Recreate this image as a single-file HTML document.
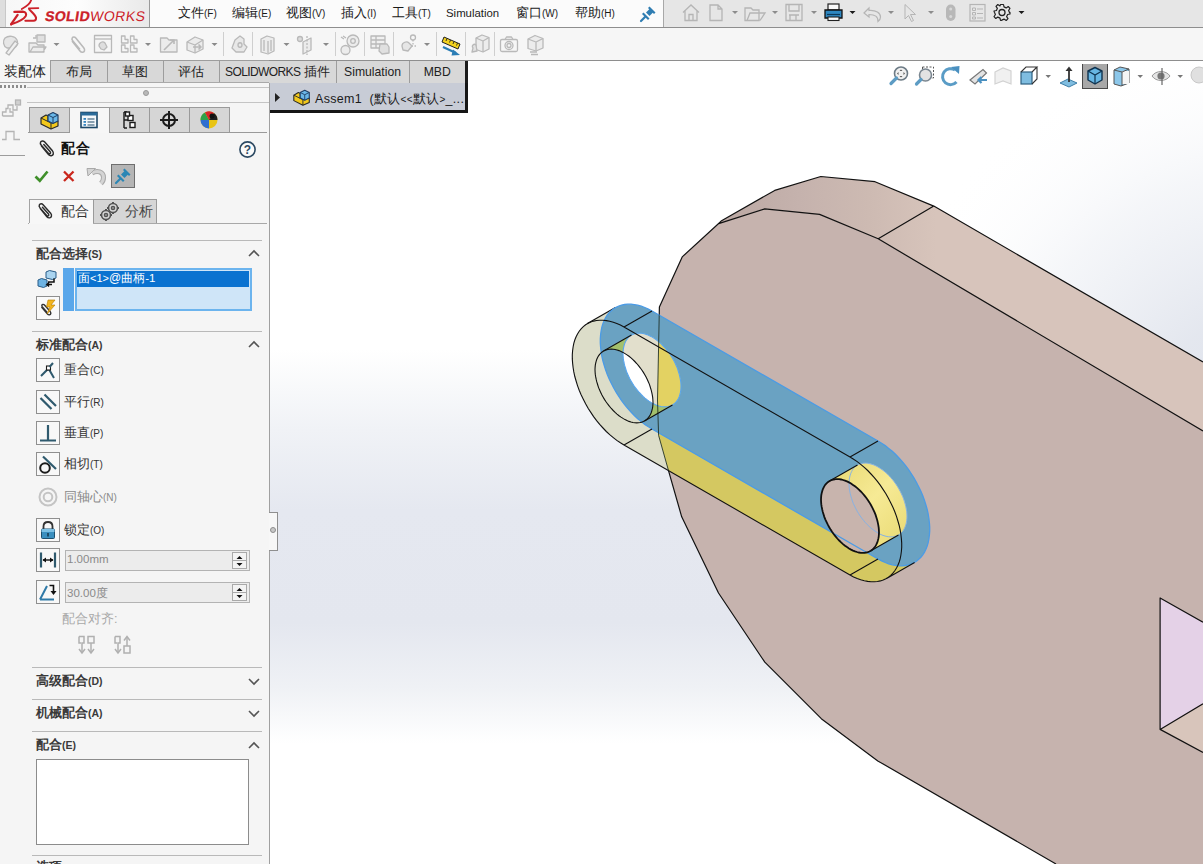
<!DOCTYPE html>
<html><head><meta charset="utf-8">
<style>
*{margin:0;padding:0;box-sizing:border-box}
html,body{width:1203px;height:864px;overflow:hidden;background:#f5f5f5;font-family:"Liberation Sans",sans-serif;color:#222}
.a{position:absolute}
.menu{font-size:13px;top:4px;color:#1a1a1a;white-space:nowrap}
.menu small{font-size:10px}
.tab{position:absolute;top:60px;height:23px;background:#d8d8d8;border:1px solid #9d9d9d;border-bottom:none;font-size:13px;text-align:center;line-height:21px;color:#222}
.hdr{position:absolute;left:36px;font-size:12.5px;font-weight:bold;color:#3a3a3a;white-space:nowrap}
.hdr small{font-size:10.5px}
.hline{position:absolute;left:32px;width:230px;height:1px;background:#b9b9b9}
.mbtn{position:absolute;left:36px;width:24px;height:24px;border:1px solid #8f8f8f;background:#f8f8f8}
.mlbl{position:absolute;left:64px;font-size:12.5px;color:#333;white-space:nowrap}
.mlbl small{font-size:10px}
</style></head><body>
<!-- MENUBAR -->
<div class="a" style="left:0;top:0;width:1203px;height:27px;background:#fbfbfb"></div>
<div class="a" style="left:0;top:0;width:5px;height:27px;background:#dedede"></div>
<div class="a" style="left:5px;top:0;width:145px;height:27px;background:linear-gradient(90deg,#f7f7f7,#fdfdfd 50%,#e9e9e9);border-left:1px solid #c8c8c8;border-right:1px solid #9a9a9a"></div>
<div class="a" style="left:663px;top:0;width:540px;height:27px;background:#e6e6e6;border-left:1px solid #a8a8a8"></div>
<div class="a" style="left:0;top:27px;width:1203px;height:1px;background:#8e8e8e"></div>
<svg class="a" style="left:0;top:0" width="150" height="27" viewBox="0 0 150 27">
<g fill="none" stroke="#cc2129" stroke-linecap="round" stroke-linejoin="round">
<path d="M11.2 24.2 L17.6 14.9" stroke-width="2.3"/>
<path d="M14.3 11.9 L22.8 11.6 C26 11.9 26.8 14 25.6 16.2 C24 18.8 20.5 21.2 11.2 24.3" stroke-width="2.1"/>
<path d="M21.8 9.0 C25.5 7 30 4.5 31.2 0.0" stroke-width="1.8"/>
<path d="M28.8 8.3 L38.4 8.1" stroke-width="1.7"/>
<path d="M29.3 9.4 C31.5 12 35.5 15 36 17.8 C36.2 19.8 35.3 20.6 33.5 20.7 L25.4 20.8" stroke-width="2.1"/>
</g>
</svg>
<div class="a" style="left:44px;top:8px;font-size:14px;line-height:16px;color:#cc2129;white-space:nowrap;transform:skewX(-9deg);transform-origin:0 100%"><b style="font-weight:bold;letter-spacing:0.45px;-webkit-text-stroke:0.3px #cc2129">SOLID</b><span style="letter-spacing:0.5px">WORKS</span></div>

<div class="a menu" style="left:178px">文件<small>(F)</small></div>
<div class="a menu" style="left:232px">编辑<small>(E)</small></div>
<div class="a menu" style="left:286px">视图<small>(V)</small></div>
<div class="a menu" style="left:341px">插入<small>(I)</small></div>
<div class="a menu" style="left:392px">工具<small>(T)</small></div>
<div class="a menu" style="left:516px">窗口<small>(W)</small></div>
<div class="a menu" style="left:575px">帮助<small>(H)</small></div>
<div class="a menu" style="left:446px;font-size:11.4px;top:7px">Simulation</div>
<svg class="a" style="left:639px;top:5px" width="18" height="18" viewBox="0 0 18 18"><g fill="#2f7db2"><path d="M10.5 1.5 L16.5 7.5 L15 9 L9 3 Z"/><path d="M11 3.5 L14.5 7 L10.5 11 L7 7.5 Z"/><path d="M4.5 7.5 L10.5 13.5 L9 15 L3 9 Z"/></g><path d="M6 12 L2 16" stroke="#2f7db2" stroke-width="2.2" stroke-linecap="round"/></svg>

<svg class="a" style="left:663px;top:0" width="540" height="27" viewBox="663 0 540 27"><g fill="none" stroke="#b5b5b5" stroke-width="1.3">
<path d="M683 12.5 L691 5 L699 12.5 M685 11 V20.5 H697 V11 M689 20.5 V14.5 H693 V20.5"/>
<path d="M710 5 H718 L722 9 V20.5 H710 Z M718 5 V9 H722"/>
<path d="M745 8 H751 L753 10 H759 V20.5 H745 Z M747 20.5 L750 13 H765 L760 20.5"/>
<path d="M786 4.5 H802 V20.5 H786 Z M789 4.5 V11 H799 V4.5 M790 15 V20.5 M796 15 V20.5 M789 15 H799"/>
<path d="M864 13 L869 8 L869 10.5 C876 10 880.5 13 880.5 17 C880.5 19 879.5 20.5 878 21.5 C878.2 16.5 875 14.5 869 14.5 L869 17 Z" stroke-width="1.2"/>
<path d="M905 4.5 L905 19 L908.5 15.5 L911.5 21.5 L913.5 20.5 L910.5 14.5 L915.5 14.5 Z" stroke-width="1"/>
<rect x="970" y="4.5" width="15" height="16.5" stroke-width="1.2"/><path d="M972.5 8 H975.5 V10.5 H972.5 Z M972.5 12.5 H975.5 V15 H972.5 Z M972.5 17 H975.5 V19 H972.5 Z M977 9 H983 M977 13.5 H983 M977 18 H983" stroke-width="1"/>
</g>
<g fill="#8c8c8c"><path d="M732 11 H738 L735 14 Z"/><path d="M772 11 H778 L775 14 Z"/><path d="M811 11 H817 L814 14 Z"/><path d="M888 11 H894 L891 14 Z"/><path d="M928 11 H934 L931 14 Z"/></g>
<g fill="#1b1b1b"><path d="M849.5 11 H855.5 L852.5 14 Z"/><path d="M1018.5 11 H1024.5 L1021.5 14 Z"/></g>
<rect x="946" y="4.5" width="9.5" height="16.5" rx="4.7" fill="#b8b8b8"/><circle cx="950.7" cy="9" r="1.5" fill="#d8d8d8"/><circle cx="950.7" cy="16.5" r="1.5" fill="#d8d8d8"/>
<rect x="828" y="4" width="11" height="6" fill="#fafafa" stroke="#222" stroke-width="1.2"/>
<path d="M825 10 H842 V18 H825 Z" fill="#2e87c0" stroke="#111" stroke-width="1.3"/><rect x="828" y="17" width="11" height="3.5" fill="#fafafa" stroke="#222" stroke-width="1.1"/>
<path d="M827 14.5 H840" stroke="#0c3a5a" stroke-width="1.2"/>
<g transform="translate(1002 12.5)"><path d="M-1.5 -8 H1.5 L2 -5.6 L4.2 -4.6 L6.2 -6 L8 -4.2 L6.6 -2 L7.6 0.2 L8 0 V1.5 L5.6 2 L4.6 4.2 L6 6.2 L4.2 8 L2 6.6 L-0.2 7.6 L-0.5 8 H-1.5 L-2 5.6 L-4.2 4.6 L-6.2 6 L-8 4.2 L-6.6 2 L-7.6 -0.2 L-8 -1.5 L-5.6 -2 L-4.6 -4.2 L-6 -6.2 L-4.2 -8 L-2 -6.6 Z" fill="none" stroke="#222" stroke-width="1.2" stroke-linejoin="round"/><circle r="3" fill="none" stroke="#222" stroke-width="1.3"/></g>
</svg>

<!-- TOOLBAR -->
<div class="a" style="left:0;top:28px;width:1203px;height:32px;background:#f6f6f6"></div>
<div class="a" style="left:50px;top:60px;width:1153px;height:1px;background:#8e8e8e"></div>
<svg class="a" style="left:0;top:27px" width="560" height="33" viewBox="0 27 560 33"><g fill="none" stroke="#b9b9b9" stroke-width="1.3" stroke-linejoin="round">
<!-- edit component -->
<path d="M5 38 C9 35 15 36 17 40 C18.5 43 17 47 14 48 L7 48 C3 46 2.5 41 5 38 Z" fill="#e6e6e6"/><path d="M6 53 L15 41 L18 43.5 L9 55 Z" fill="#f0f0f0"/>
<!-- insert components -->
<path d="M29 43 H36 L38 45 H44 V52 H29 Z M30 52 L33 47 H46 L43 52" fill="#ececec"/><rect x="37" y="35" width="8" height="7" fill="#e0e0e0"/><path d="M33 38 H36 V35"/>
<!-- mate paperclip -->
<path d="M72 41 L80 51 C81.5 53 84 52.5 84.5 50.8 C85 49.5 84.4 48.6 83.7 47.7 L75.8 38 C74.7 36.7 72.8 36.8 72.2 38 C71.7 39 72 40 72.7 40.8 L80 49.5" stroke-width="1.6"/>
<!-- component preview -->
<rect x="94.5" y="35.5" width="17" height="17"/><path d="M94.5 39 H111.5"/><path d="M99 46 C99 42 103 41 105 43 L107 47 L104 50 L101 49 Z" fill="#dedede"/>
<!-- pattern -->
<path d="M121.5 36 H125 V39.5 H128 V43 H121.5 Z M130.5 36 H134 V39.5 H137 V43 H130.5 Z M121.5 45 H125 V48.5 H128 V52 H121.5 Z M130.5 45 H134 V48.5 H137 V52 H130.5 Z"/>
<!-- smart fasteners -->
<path d="M160.5 38 H167 L169 40 H177 V52 H160.5 Z" fill="#ececec"/><path d="M164 50 L174 40 M170 40 H174 V44" stroke-width="1.6"/>
<!-- move component -->
<path d="M187 42 L195 37 L203 40 V49 L195 53 L187 50 Z" fill="#ececec"/><path d="M187 42 L195 45 L203 40 M195 45 V53"/><path d="M193 47 H201 M198.5 44.5 L201 47 L198.5 49.5" stroke-width="1.6"/>
<!-- show hidden -->
<path d="M235 40 L240 36 L244 39 L244 44 L247 47 L244 52 L236 52 L232 48 Z" fill="#e8e8e8"/><path d="M238 45 C238 42 242 42 242 45 C242 48 238 48 238 45" />
<!-- assembly features -->
<path d="M261 39 L267 36 L274 38 V51 L268 54 L261 52 Z" fill="#ececec"/><path d="M264 40 V51 M268 41 V53 M271 40 V51"/>
<!-- ref geometry -->
<circle cx="300" cy="39" r="2.5" fill="#dcdcdc"/><path d="M303 42 L311 38 V50 L303 54 Z" fill="#ececec"/><path d="M307 36 V55" stroke-dasharray="2 1.5"/>
<!-- motion study -->
<circle cx="353" cy="41" r="6" fill="#ececec"/><circle cx="353" cy="41" r="2.3"/><circle cx="345.5" cy="50" r="4.5" fill="#ececec"/><path d="M343 36 L346 38 M344 39 L341 37"/>
<!-- BOM -->
<rect x="371" y="36" width="14" height="12" fill="#f0f0f0"/><path d="M371 40 H385 M371 44 H385 M376 36 V48"/><path d="M380 44 L387 44 L389 47 V53 L382 54 L379 51 Z" fill="#e0e0e0"/>
<!-- exploded -->
<path d="M402 46 C402 42 407 41 409 43 L412 46 L408 51 L403 50 Z" fill="#e6e6e6"/><circle cx="413" cy="37.5" r="2.5"/><path d="M413 40 V46 M416 46 H410" stroke-dasharray="1.5 1.5"/>
<!-- interference -->
<path d="M476 38 L482 35 L489 37.5 V49 L483 52 L476 49.5 Z" fill="#ececec"/><path d="M476 38 L483 41 L489 37.5 M483 41 V52"/><path d="M473 48 C471 46 474 43 476 45 L477 51 L472 52 Z" fill="#e3e3e3"/>
<!-- camera -->
<rect x="500.5" y="39.5" width="17" height="12" rx="1.5"/><circle cx="509" cy="45.5" r="4"/><circle cx="509" cy="45.5" r="2"/><path d="M505 39.5 L506.5 37 H511.5 L513 39.5"/>
<!-- last -->
<path d="M528 39 L535 35.5 L543 38.5 V48 L536 51 L528 48.5 Z" fill="#ececec"/><path d="M528 39 L536 42 L543 38.5 M536 42 V51 M530 52 H537 M531 54.5 H538"/>
</g>
<g fill="#8a8a8a"><path d="M53.5 43 H59.5 L56.5 46 Z"/><path d="M145 43 H151 L148 46 Z"/><path d="M211.5 43 H217.5 L214.5 46 Z"/><path d="M283.5 43 H289.5 L286.5 46 Z"/><path d="M323 43 H329 L326 46 Z"/><path d="M424 43 H430 L427 46 Z"/></g>
<g fill="#cfcfcf"><rect x="223" y="32" width="1" height="24"/><rect x="252" y="32" width="1" height="24"/><rect x="335" y="32" width="1" height="24"/><rect x="364" y="32" width="1" height="24"/><rect x="393" y="32" width="1" height="24"/><rect x="436" y="32" width="1" height="24"/><rect x="465" y="32" width="1" height="24"/><rect x="494" y="32" width="1" height="24"/></g>
<!-- measure (coloured) -->
<path d="M444 37 L460 44 L458 49 L442 42 Z" fill="#f3d21f" stroke="#222" stroke-width="1"/><path d="M447 38.5 L446 41 M450.5 40 L449.5 42.5 M454 41.5 L453 44 M457.5 43 L456.5 45.5" stroke="#222" stroke-width="0.9"/>
<path d="M443 47 L456 53" stroke="#2a7db5" stroke-width="2.2"/><path d="M453 49.5 L460 55 L451.5 55.5 Z" fill="#2a7db5"/>
</svg>

<!-- VIEWPORT -->
<svg width="934" height="804" viewBox="269 60 934 804" style="position:absolute;left:269px;top:60px">
<defs>
<filter id="blur" filterUnits="userSpaceOnUse" x="0" y="0" width="1500" height="1100"><feGaussianBlur stdDeviation="55"/></filter>
<clipPath id="cbody"><path d="M682.2 256.9 L721.1 221.1 L774.7 190.4 L820.8 176.5 L875.0 181.7 L933.8 206.1 L1203.0 362.0 L1203.0 864.0 L1056.0 864.0 L877.8 760.9 L821.3 718.7 L764.8 662.2 L718.5 593.0 L681.7 516.8 L668.5 470.6 L658.6 435.4 L657.5 400.0 L659.4 307.1 Z"/></clipPath>
<clipPath id="cvp"><rect x="269" y="60" width="934" height="804"/></clipPath>
<linearGradient id="gtop" gradientUnits="userSpaceOnUse" x1="720" y1="0" x2="960" y2="0"><stop offset="0" stop-color="#bba8a3"/><stop offset="0.33" stop-color="#c5b2ad"/><stop offset="0.62" stop-color="#cdbab2"/><stop offset="0.9" stop-color="#d7c4bb"/></linearGradient>
<linearGradient id="gyel" x1="0" y1="0" x2="1" y2="1"><stop offset="0" stop-color="#e6d66e"/><stop offset="0.5" stop-color="#f6ea95"/><stop offset="1" stop-color="#e8d870"/></linearGradient>
</defs>
<rect x="269" y="60" width="934" height="804" fill="#ffffff"/>
<linearGradient id="gbg" gradientUnits="userSpaceOnUse" x1="0" y1="60" x2="0" y2="864">
<stop offset="0.36" stop-color="#ffffff"/><stop offset="0.46" stop-color="#f0f2f6"/><stop offset="0.56" stop-color="#e5e8f0"/><stop offset="0.70" stop-color="#e4e7ef"/><stop offset="0.78" stop-color="#eff1f5"/><stop offset="0.85" stop-color="#ffffff"/></linearGradient>
<radialGradient id="gbr" gradientUnits="userSpaceOnUse" cx="1270" cy="430" r="400"><stop offset="0" stop-color="#dde1eb" stop-opacity="1"/><stop offset="0.3" stop-color="#dfe3ec" stop-opacity="0.85"/><stop offset="0.65" stop-color="#e2e6ee" stop-opacity="0.35"/><stop offset="1" stop-color="#ffffff" stop-opacity="0"/></radialGradient>
<rect x="269" y="60" width="934" height="804" fill="url(#gbg)"/>
<rect x="269" y="60" width="934" height="804" fill="url(#gbr)"/>
<path d="M718.6 223.6 L764.7 208.9 L819.6 214.4 L878.2 238.8 L1203.0 431.0 L1203.0 864.0 L1056.0 864.0 L877.8 760.9 L821.3 718.7 L764.8 662.2 L718.5 593.0 L681.7 516.8 L668.5 470.6 L658.6 435.4 L657.5 400.0 L659.4 307.1 L682.2 256.9 Z" fill="#c6b3ae"/>
<path d="M721.1 221.1 L774.7 190.4 L820.8 176.5 L875.0 181.7 L933.8 206.1 L1203.0 362.0 L1203.0 431.0 L878.2 238.8 L819.6 214.4 L764.7 208.9 L718.6 223.6 Z" fill="url(#gtop)"/>
<path d="M1160.1 598.0 L1203.0 622.3 L1203.0 703.8 L1160.1 729.4 Z" fill="#e4d1e7"/>
<path d="M1160.1 729.4 L1203.0 703.8 L1203.0 752.5 Z" fill="#d8c5bb"/>
<path d="M682.2 256.9 L721.1 221.1 L774.7 190.4 L820.8 176.5 L875.0 181.7 L933.8 206.1 L1203.0 362.0 M718.6 223.6 L764.7 208.9 L819.6 214.4 L878.2 238.8 L1203.0 431.0 M878.2 238.8 L933.8 206.1 M1056.0 864.0 L877.8 760.9 L821.3 718.7 L764.8 662.2 L718.5 593.0 L681.7 516.8 L668.5 470.6 L658.6 435.4 L657.5 400.0 L659.4 307.1 L682.2 256.9 L718.6 223.6 M1203.0 622.3 L1160.1 598.0 L1160.1 729.4 L1203.0 752.5 M1160.1 729.4 L1203.0 703.8" fill="none" stroke="#111" stroke-width="1.2" stroke-linejoin="round"/>
<path d="M652.0 311.0 L878.0 441.0 L881.7 443.2 L885.4 445.8 L889.0 448.6 L892.6 451.6 L896.1 454.9 L899.5 458.5 L902.8 462.2 L906.0 466.2 L909.0 470.3 L911.9 474.5 L914.6 478.9 L917.1 483.4 L919.4 488.0 L921.5 492.7 L923.4 497.4 L925.0 502.1 L926.4 506.7 L927.6 511.4 L928.5 516.0 L929.2 520.5 L929.6 524.9 L929.7 529.2 L929.6 533.3 L929.2 537.3 L928.5 541.1 L927.6 544.6 L926.4 548.0 L925.0 551.1 L923.4 553.9 L921.5 556.5 L919.4 558.7 L917.1 560.7 L914.6 562.4 L886.6 578.4 L883.9 579.7 L881.0 580.7 L878.0 581.4 L874.8 581.8 L871.5 581.8 L868.1 581.5 L864.6 580.8 L861.0 579.9 L857.4 578.6 L853.7 576.9 L850.0 575.0 L624.0 445.0 L620.3 442.8 L616.6 440.2 L613.0 437.4 L609.4 434.4 L605.9 431.1 L602.5 427.5 L599.2 423.8 L596.0 419.8 L593.0 415.7 L590.1 411.5 L587.4 407.1 L584.9 402.6 L582.6 398.0 L580.5 393.3 L578.6 388.6 L577.0 383.9 L575.6 379.3 L574.4 374.6 L573.5 370.0 L572.8 365.5 L572.4 361.1 L572.3 356.8 L572.4 352.7 L572.8 348.7 L573.5 344.9 L574.4 341.4 L575.6 338.0 L577.0 334.9 L578.6 332.1 L580.5 329.5 L582.6 327.3 L584.9 325.3 L587.4 323.6 L615.4 307.6 L618.1 306.3 L621.0 305.3 L624.0 304.6 L627.2 304.2 L630.5 304.2 L633.9 304.5 L637.4 305.2 L641.0 306.1 L644.6 307.4 L648.3 309.1 L652.0 311.0 Z" fill="#dcddc9"/>
<path d="M652.0 311.0 L878.0 441.0 L881.7 443.2 L885.4 445.8 L889.0 448.6 L892.6 451.6 L896.1 454.9 L899.5 458.5 L902.8 462.2 L906.0 466.2 L909.0 470.3 L911.9 474.5 L914.6 478.9 L917.1 483.4 L919.4 488.0 L921.5 492.7 L923.4 497.4 L925.0 502.1 L926.4 506.7 L927.6 511.4 L928.5 516.0 L929.2 520.5 L929.6 524.9 L929.7 529.2 L929.6 533.3 L929.2 537.3 L928.5 541.1 L927.6 544.6 L926.4 548.0 L925.0 551.1 L923.4 553.9 L921.5 556.5 L919.4 558.7 L917.1 560.7 L914.6 562.4 L886.6 578.4 L883.9 579.7 L881.0 580.7 L878.0 581.4 L874.8 581.8 L871.5 581.8 L868.1 581.5 L864.6 580.8 L861.0 579.9 L857.4 578.6 L853.7 576.9 L850.0 575.0 L624.0 445.0 L620.3 442.8 L616.6 440.2 L613.0 437.4 L609.4 434.4 L605.9 431.1 L602.5 427.5 L599.2 423.8 L596.0 419.8 L593.0 415.7 L590.1 411.5 L587.4 407.1 L584.9 402.6 L582.6 398.0 L580.5 393.3 L578.6 388.6 L577.0 383.9 L575.6 379.3 L574.4 374.6 L573.5 370.0 L572.8 365.5 L572.4 361.1 L572.3 356.8 L572.4 352.7 L572.8 348.7 L573.5 344.9 L574.4 341.4 L575.6 338.0 L577.0 334.9 L578.6 332.1 L580.5 329.5 L582.6 327.3 L584.9 325.3 L587.4 323.6 L615.4 307.6 L618.1 306.3 L621.0 305.3 L624.0 304.6 L627.2 304.2 L630.5 304.2 L633.9 304.5 L637.4 305.2 L641.0 306.1 L644.6 307.4 L648.3 309.1 L652.0 311.0 Z" fill="#d4c861" clip-path="url(#cbody)"/>
<path d="M587.4 323.6 L615.4 307.6" fill="none" stroke="#111" stroke-width="1.1"/>
<path d="M878.0 441.0 L881.6 443.2 L885.2 445.6 L888.7 448.4 L892.3 451.3 L895.7 454.5 L899.0 458.0 L902.3 461.6 L905.4 465.4 L908.4 469.4 L911.2 473.6 L913.9 477.8 L916.4 482.2 L918.7 486.7 L920.9 491.2 L922.8 495.8 L924.5 500.4 L925.9 505.0 L927.2 509.5 L928.2 514.1 L928.9 518.5 L929.4 522.9 L929.7 527.1 L929.7 531.2 L929.4 535.2 L928.9 539.0 L928.2 542.6 L927.2 546.0 L925.9 549.2 L924.5 552.1 L922.8 554.8 L920.9 557.2 L918.7 559.3 L916.4 561.2 L913.9 562.7 L911.2 564.0 L908.4 564.9 L905.4 565.5 L902.3 565.8 L899.0 565.8 L895.7 565.4 L892.3 564.8 L888.7 563.8 L885.2 562.5 L881.6 560.9 L878.0 559.0 L652.0 429.0 L648.4 426.8 L644.8 424.4 L641.3 421.6 L637.7 418.7 L634.3 415.5 L631.0 412.0 L627.7 408.4 L624.6 404.6 L621.6 400.6 L618.8 396.4 L616.1 392.2 L613.6 387.8 L611.3 383.3 L609.1 378.8 L607.2 374.2 L605.5 369.6 L604.1 365.0 L602.8 360.5 L601.8 355.9 L601.1 351.5 L600.6 347.1 L600.3 342.9 L600.3 338.8 L600.6 334.8 L601.1 331.0 L601.8 327.4 L602.8 324.0 L604.1 320.8 L605.5 317.9 L607.2 315.2 L609.1 312.8 L611.3 310.7 L613.6 308.8 L616.1 307.3 L618.8 306.0 L621.6 305.1 L624.6 304.5 L627.7 304.2 L631.0 304.2 L634.3 304.6 L637.7 305.2 L641.3 306.2 L644.8 307.5 L648.4 309.1 L652.0 311.0 Z M681.0 386.4 L680.9 384.0 L680.7 381.6 L680.3 379.1 L679.8 376.6 L679.2 374.1 L678.4 371.5 L677.6 368.9 L676.6 366.4 L675.4 363.8 L674.2 361.3 L672.8 358.8 L671.4 356.4 L669.8 354.0 L668.2 351.8 L666.5 349.6 L664.7 347.5 L662.8 345.5 L660.9 343.6 L659.0 341.9 L657.0 340.3 L655.0 338.9 L653.0 337.6 L651.0 336.4 L649.0 335.4 L647.0 334.6 L645.0 334.0 L643.1 333.5 L641.2 333.2 L639.3 333.1 L637.5 333.2 L635.8 333.5 L634.2 333.9 L632.6 334.5 L631.2 335.3 L629.8 336.2 L628.6 337.4 L627.4 338.6 L626.4 340.1 L625.6 341.6 L624.8 343.3 L624.2 345.2 L623.7 347.1 L623.3 349.2 L623.1 351.4 L623.0 353.6 L623.1 356.0 L623.3 358.4 L623.7 360.9 L624.2 363.4 L624.8 365.9 L625.6 368.5 L626.4 371.1 L627.4 373.6 L628.6 376.2 L629.8 378.7 L631.2 381.2 L632.6 383.6 L634.2 386.0 L635.8 388.2 L637.5 390.4 L639.3 392.5 L641.2 394.5 L643.1 396.4 L645.0 398.1 L647.0 399.7 L649.0 401.1 L651.0 402.4 L653.0 403.6 L655.0 404.6 L657.0 405.4 L659.0 406.0 L660.9 406.5 L662.8 406.8 L664.7 406.9 L666.5 406.8 L668.2 406.5 L669.8 406.1 L671.4 405.5 L672.8 404.7 L674.2 403.8 L675.4 402.6 L676.6 401.4 L677.6 399.9 L678.4 398.4 L679.2 396.7 L679.8 394.8 L680.3 392.9 L680.7 390.8 L680.9 388.6 L681.0 386.4 Z M907.0 516.4 L906.9 514.0 L906.7 511.6 L906.3 509.1 L905.8 506.6 L905.2 504.1 L904.4 501.5 L903.6 498.9 L902.6 496.4 L901.4 493.8 L900.2 491.3 L898.8 488.8 L897.4 486.4 L895.8 484.0 L894.2 481.8 L892.5 479.6 L890.7 477.5 L888.8 475.5 L886.9 473.6 L885.0 471.9 L883.0 470.3 L881.0 468.9 L879.0 467.6 L877.0 466.4 L875.0 465.4 L873.0 464.6 L871.0 464.0 L869.1 463.5 L867.2 463.2 L865.3 463.1 L863.5 463.2 L861.8 463.5 L860.2 463.9 L858.6 464.5 L857.2 465.3 L855.8 466.2 L854.6 467.4 L853.4 468.6 L852.4 470.1 L851.6 471.6 L850.8 473.3 L850.2 475.2 L849.7 477.1 L849.3 479.2 L849.1 481.4 L849.0 483.6 L849.1 486.0 L849.3 488.4 L849.7 490.9 L850.2 493.4 L850.8 495.9 L851.6 498.5 L852.4 501.1 L853.4 503.6 L854.6 506.2 L855.8 508.7 L857.2 511.2 L858.6 513.6 L860.2 516.0 L861.8 518.2 L863.5 520.4 L865.3 522.5 L867.2 524.5 L869.1 526.4 L871.0 528.1 L873.0 529.7 L875.0 531.1 L877.0 532.4 L879.0 533.6 L881.0 534.6 L883.0 535.4 L885.0 536.0 L886.9 536.5 L888.8 536.8 L890.7 536.9 L892.5 536.8 L894.2 536.5 L895.8 536.1 L897.4 535.5 L898.8 534.7 L900.2 533.8 L901.4 532.6 L902.6 531.4 L903.6 529.9 L904.4 528.4 L905.2 526.7 L905.8 524.8 L906.3 522.9 L906.7 520.8 L906.9 518.6 L907.0 516.4 Z" fill="#6aa2c2" fill-rule="evenodd"/>
<path d="M631.5 335.1 L633.0 334.3 L634.6 333.8 L636.2 333.4 L638.0 333.2 L639.8 333.1 L641.6 333.3 L643.5 333.6 L645.5 334.1 L647.5 334.8 L649.5 335.7 L651.5 336.7 L653.5 337.9 L655.5 339.2 L657.5 340.7 L659.5 342.3 L661.4 344.1 L663.3 346.0 L665.1 348.0 L666.9 350.1 L668.6 352.3 L670.2 354.6 L671.7 357.0 L673.2 359.4 L674.5 361.9 L675.7 364.4 L676.8 367.0 L677.8 369.6 L678.7 372.1 L679.4 374.7 L680.0 377.2 L680.4 379.7 L680.7 382.2 L680.9 384.6 L680.9 386.9 L680.8 389.2 L680.6 391.3 L680.2 393.4 L679.7 395.3 L679.0 397.1 L678.2 398.8 L677.3 400.3 L676.3 401.7 L675.1 402.9 L673.9 404.0 L672.5 404.9 L644.5 420.9 L643.0 421.7 L641.4 422.2 L639.8 422.6 L638.0 422.8 L636.2 422.9 L634.4 422.7 L632.5 422.4 L630.5 421.9 L628.5 421.2 L626.5 420.3 L624.5 419.3 L622.5 418.1 L620.5 416.8 L618.5 415.3 L616.5 413.7 L614.6 411.9 L612.7 410.0 L610.9 408.0 L609.1 405.9 L607.4 403.7 L605.8 401.4 L604.3 399.0 L602.8 396.6 L601.5 394.1 L600.3 391.6 L599.2 389.0 L598.2 386.4 L597.3 383.9 L596.6 381.3 L596.0 378.8 L595.6 376.3 L595.3 373.8 L595.1 371.4 L595.1 369.1 L595.2 366.8 L595.4 364.7 L595.8 362.6 L596.3 360.7 L597.0 358.9 L597.8 357.2 L598.7 355.7 L599.7 354.3 L600.9 353.1 L602.1 352.0 L603.5 351.1 Z" fill="#a3c06c"/>
<path d="M681.0 386.4 L680.9 384.0 L680.7 381.6 L680.3 379.1 L679.8 376.6 L679.2 374.1 L678.4 371.5 L677.6 368.9 L676.6 366.4 L675.4 363.8 L674.2 361.3 L672.8 358.8 L671.4 356.4 L669.8 354.0 L668.2 351.8 L666.5 349.6 L664.7 347.5 L662.8 345.5 L660.9 343.6 L659.0 341.9 L657.0 340.3 L655.0 338.9 L653.0 337.6 L651.0 336.4 L649.0 335.4 L647.0 334.6 L645.0 334.0 L643.1 333.5 L641.2 333.2 L639.3 333.1 L637.5 333.2 L635.8 333.5 L634.2 333.9 L632.6 334.5 L631.2 335.3 L629.8 336.2 L628.6 337.4 L627.4 338.6 L626.4 340.1 L625.6 341.6 L624.8 343.3 L624.2 345.2 L623.7 347.1 L623.3 349.2 L623.1 351.4 L623.0 353.6 L623.1 356.0 L623.3 358.4 L623.7 360.9 L624.2 363.4 L624.8 365.9 L625.6 368.5 L626.4 371.1 L627.4 373.6 L628.6 376.2 L629.8 378.7 L631.2 381.2 L632.6 383.6 L634.2 386.0 L635.8 388.2 L637.5 390.4 L639.3 392.5 L641.2 394.5 L643.1 396.4 L645.0 398.1 L647.0 399.7 L649.0 401.1 L651.0 402.4 L653.0 403.6 L655.0 404.6 L657.0 405.4 L659.0 406.0 L660.9 406.5 L662.8 406.8 L664.7 406.9 L666.5 406.8 L668.2 406.5 L669.8 406.1 L671.4 405.5 L672.8 404.7 L674.2 403.8 L675.4 402.6 L676.6 401.4 L677.6 399.9 L678.4 398.4 L679.2 396.7 L679.8 394.8 L680.3 392.9 L680.7 390.8 L680.9 388.6 L681.0 386.4 Z" fill="#e2dfcc"/>
<path d="M681.0 386.4 L680.9 384.0 L680.7 381.6 L680.3 379.1 L679.8 376.6 L679.2 374.1 L678.4 371.5 L677.6 368.9 L676.6 366.4 L675.4 363.8 L674.2 361.3 L672.8 358.8 L671.4 356.4 L669.8 354.0 L668.2 351.8 L666.5 349.6 L664.7 347.5 L662.8 345.5 L660.9 343.6 L659.0 341.9 L657.0 340.3 L655.0 338.9 L653.0 337.6 L651.0 336.4 L649.0 335.4 L647.0 334.6 L645.0 334.0 L643.1 333.5 L641.2 333.2 L639.3 333.1 L637.5 333.2 L635.8 333.5 L634.2 333.9 L632.6 334.5 L631.2 335.3 L629.8 336.2 L628.6 337.4 L627.4 338.6 L626.4 340.1 L625.6 341.6 L624.8 343.3 L624.2 345.2 L623.7 347.1 L623.3 349.2 L623.1 351.4 L623.0 353.6 L623.1 356.0 L623.3 358.4 L623.7 360.9 L624.2 363.4 L624.8 365.9 L625.6 368.5 L626.4 371.1 L627.4 373.6 L628.6 376.2 L629.8 378.7 L631.2 381.2 L632.6 383.6 L634.2 386.0 L635.8 388.2 L637.5 390.4 L639.3 392.5 L641.2 394.5 L643.1 396.4 L645.0 398.1 L647.0 399.7 L649.0 401.1 L651.0 402.4 L653.0 403.6 L655.0 404.6 L657.0 405.4 L659.0 406.0 L660.9 406.5 L662.8 406.8 L664.7 406.9 L666.5 406.8 L668.2 406.5 L669.8 406.1 L671.4 405.5 L672.8 404.7 L674.2 403.8 L675.4 402.6 L676.6 401.4 L677.6 399.9 L678.4 398.4 L679.2 396.7 L679.8 394.8 L680.3 392.9 L680.7 390.8 L680.9 388.6 L681.0 386.4 Z" fill="#e3d262" clip-path="url(#cbody)"/>
<clipPath id="cbs"><path d="M878.0 441.0 L881.6 443.2 L885.2 445.6 L888.7 448.4 L892.3 451.3 L895.7 454.5 L899.0 458.0 L902.3 461.6 L905.4 465.4 L908.4 469.4 L911.2 473.6 L913.9 477.8 L916.4 482.2 L918.7 486.7 L920.9 491.2 L922.8 495.8 L924.5 500.4 L925.9 505.0 L927.2 509.5 L928.2 514.1 L928.9 518.5 L929.4 522.9 L929.7 527.1 L929.7 531.2 L929.4 535.2 L928.9 539.0 L928.2 542.6 L927.2 546.0 L925.9 549.2 L924.5 552.1 L922.8 554.8 L920.9 557.2 L918.7 559.3 L916.4 561.2 L913.9 562.7 L911.2 564.0 L908.4 564.9 L905.4 565.5 L902.3 565.8 L899.0 565.8 L895.7 565.4 L892.3 564.8 L888.7 563.8 L885.2 562.5 L881.6 560.9 L878.0 559.0 L652.0 429.0 L648.4 426.8 L644.8 424.4 L641.3 421.6 L637.7 418.7 L634.3 415.5 L631.0 412.0 L627.7 408.4 L624.6 404.6 L621.6 400.6 L618.8 396.4 L616.1 392.2 L613.6 387.8 L611.3 383.3 L609.1 378.8 L607.2 374.2 L605.5 369.6 L604.1 365.0 L602.8 360.5 L601.8 355.9 L601.1 351.5 L600.6 347.1 L600.3 342.9 L600.3 338.8 L600.6 334.8 L601.1 331.0 L601.8 327.4 L602.8 324.0 L604.1 320.8 L605.5 317.9 L607.2 315.2 L609.1 312.8 L611.3 310.7 L613.6 308.8 L616.1 307.3 L618.8 306.0 L621.6 305.1 L624.6 304.5 L627.7 304.2 L631.0 304.2 L634.3 304.6 L637.7 305.2 L641.3 306.2 L644.8 307.5 L648.4 309.1 L652.0 311.0 Z"/></clipPath>
<path d="M653.0 402.4 L652.9 400.0 L652.7 397.6 L652.3 395.1 L651.8 392.6 L651.2 390.1 L650.4 387.5 L649.6 384.9 L648.6 382.4 L647.4 379.8 L646.2 377.3 L644.8 374.8 L643.4 372.4 L641.8 370.0 L640.2 367.8 L638.5 365.6 L636.7 363.5 L634.8 361.5 L632.9 359.6 L631.0 357.9 L629.0 356.3 L627.0 354.9 L625.0 353.6 L623.0 352.4 L621.0 351.4 L619.0 350.6 L617.0 350.0 L615.1 349.5 L613.2 349.2 L611.3 349.1 L609.5 349.2 L607.8 349.5 L606.2 349.9 L604.6 350.5 L603.2 351.3 L601.8 352.2 L600.6 353.4 L599.4 354.6 L598.4 356.1 L597.6 357.6 L596.8 359.3 L596.2 361.2 L595.7 363.1 L595.3 365.2 L595.1 367.4 L595.0 369.6 L595.1 372.0 L595.3 374.4 L595.7 376.9 L596.2 379.4 L596.8 381.9 L597.6 384.5 L598.4 387.1 L599.4 389.6 L600.6 392.2 L601.8 394.7 L603.2 397.2 L604.6 399.6 L606.2 402.0 L607.8 404.2 L609.5 406.4 L611.3 408.5 L613.2 410.5 L615.1 412.4 L617.0 414.1 L619.0 415.7 L621.0 417.1 L623.0 418.4 L625.0 419.6 L627.0 420.6 L629.0 421.4 L631.0 422.0 L632.9 422.5 L634.8 422.8 L636.7 422.9 L638.5 422.8 L640.2 422.5 L641.8 422.1 L643.4 421.5 L644.8 420.7 L646.2 419.8 L647.4 418.6 L648.6 417.4 L649.6 415.9 L650.4 414.4 L651.2 412.7 L651.8 410.8 L652.3 408.9 L652.7 406.8 L652.9 404.6 L653.0 402.4 Z" fill="#dcddc9"/>
<path d="M653.0 402.4 L652.9 400.0 L652.7 397.6 L652.3 395.1 L651.8 392.6 L651.2 390.1 L650.4 387.5 L649.6 384.9 L648.6 382.4 L647.4 379.8 L646.2 377.3 L644.8 374.8 L643.4 372.4 L641.8 370.0 L640.2 367.8 L638.5 365.6 L636.7 363.5 L634.8 361.5 L632.9 359.6 L631.0 357.9 L629.0 356.3 L627.0 354.9 L625.0 353.6 L623.0 352.4 L621.0 351.4 L619.0 350.6 L617.0 350.0 L615.1 349.5 L613.2 349.2 L611.3 349.1 L609.5 349.2 L607.8 349.5 L606.2 349.9 L604.6 350.5 L603.2 351.3 L601.8 352.2 L600.6 353.4 L599.4 354.6 L598.4 356.1 L597.6 357.6 L596.8 359.3 L596.2 361.2 L595.7 363.1 L595.3 365.2 L595.1 367.4 L595.0 369.6 L595.1 372.0 L595.3 374.4 L595.7 376.9 L596.2 379.4 L596.8 381.9 L597.6 384.5 L598.4 387.1 L599.4 389.6 L600.6 392.2 L601.8 394.7 L603.2 397.2 L604.6 399.6 L606.2 402.0 L607.8 404.2 L609.5 406.4 L611.3 408.5 L613.2 410.5 L615.1 412.4 L617.0 414.1 L619.0 415.7 L621.0 417.1 L623.0 418.4 L625.0 419.6 L627.0 420.6 L629.0 421.4 L631.0 422.0 L632.9 422.5 L634.8 422.8 L636.7 422.9 L638.5 422.8 L640.2 422.5 L641.8 422.1 L643.4 421.5 L644.8 420.7 L646.2 419.8 L647.4 418.6 L648.6 417.4 L649.6 415.9 L650.4 414.4 L651.2 412.7 L651.8 410.8 L652.3 408.9 L652.7 406.8 L652.9 404.6 L653.0 402.4 Z" fill="#6aa2c2" clip-path="url(#cbs)"/>
<clipPath id="ch1"><path d="M681.0 386.4 L680.9 384.0 L680.7 381.6 L680.3 379.1 L679.8 376.6 L679.2 374.1 L678.4 371.5 L677.6 368.9 L676.6 366.4 L675.4 363.8 L674.2 361.3 L672.8 358.8 L671.4 356.4 L669.8 354.0 L668.2 351.8 L666.5 349.6 L664.7 347.5 L662.8 345.5 L660.9 343.6 L659.0 341.9 L657.0 340.3 L655.0 338.9 L653.0 337.6 L651.0 336.4 L649.0 335.4 L647.0 334.6 L645.0 334.0 L643.1 333.5 L641.2 333.2 L639.3 333.1 L637.5 333.2 L635.8 333.5 L634.2 333.9 L632.6 334.5 L631.2 335.3 L629.8 336.2 L628.6 337.4 L627.4 338.6 L626.4 340.1 L625.6 341.6 L624.8 343.3 L624.2 345.2 L623.7 347.1 L623.3 349.2 L623.1 351.4 L623.0 353.6 L623.1 356.0 L623.3 358.4 L623.7 360.9 L624.2 363.4 L624.8 365.9 L625.6 368.5 L626.4 371.1 L627.4 373.6 L628.6 376.2 L629.8 378.7 L631.2 381.2 L632.6 383.6 L634.2 386.0 L635.8 388.2 L637.5 390.4 L639.3 392.5 L641.2 394.5 L643.1 396.4 L645.0 398.1 L647.0 399.7 L649.0 401.1 L651.0 402.4 L653.0 403.6 L655.0 404.6 L657.0 405.4 L659.0 406.0 L660.9 406.5 L662.8 406.8 L664.7 406.9 L666.5 406.8 L668.2 406.5 L669.8 406.1 L671.4 405.5 L672.8 404.7 L674.2 403.8 L675.4 402.6 L676.6 401.4 L677.6 399.9 L678.4 398.4 L679.2 396.7 L679.8 394.8 L680.3 392.9 L680.7 390.8 L680.9 388.6 L681.0 386.4 Z"/></clipPath>
<path d="M653.0 402.4 L652.9 400.0 L652.7 397.6 L652.3 395.1 L651.8 392.6 L651.2 390.1 L650.4 387.5 L649.6 384.9 L648.6 382.4 L647.4 379.8 L646.2 377.3 L644.8 374.8 L643.4 372.4 L641.8 370.0 L640.2 367.8 L638.5 365.6 L636.7 363.5 L634.8 361.5 L632.9 359.6 L631.0 357.9 L629.0 356.3 L627.0 354.9 L625.0 353.6 L623.0 352.4 L621.0 351.4 L619.0 350.6 L617.0 350.0 L615.1 349.5 L613.2 349.2 L611.3 349.1 L609.5 349.2 L607.8 349.5 L606.2 349.9 L604.6 350.5 L603.2 351.3 L601.8 352.2 L600.6 353.4 L599.4 354.6 L598.4 356.1 L597.6 357.6 L596.8 359.3 L596.2 361.2 L595.7 363.1 L595.3 365.2 L595.1 367.4 L595.0 369.6 L595.1 372.0 L595.3 374.4 L595.7 376.9 L596.2 379.4 L596.8 381.9 L597.6 384.5 L598.4 387.1 L599.4 389.6 L600.6 392.2 L601.8 394.7 L603.2 397.2 L604.6 399.6 L606.2 402.0 L607.8 404.2 L609.5 406.4 L611.3 408.5 L613.2 410.5 L615.1 412.4 L617.0 414.1 L619.0 415.7 L621.0 417.1 L623.0 418.4 L625.0 419.6 L627.0 420.6 L629.0 421.4 L631.0 422.0 L632.9 422.5 L634.8 422.8 L636.7 422.9 L638.5 422.8 L640.2 422.5 L641.8 422.1 L643.4 421.5 L644.8 420.7 L646.2 419.8 L647.4 418.6 L648.6 417.4 L649.6 415.9 L650.4 414.4 L651.2 412.7 L651.8 410.8 L652.3 408.9 L652.7 406.8 L652.9 404.6 L653.0 402.4 Z" fill="#ffffff" clip-path="url(#ch1)"/>
<path d="M857.5 465.1 L859.0 464.3 L860.6 463.8 L862.2 463.4 L864.0 463.2 L865.8 463.1 L867.6 463.3 L869.5 463.6 L871.5 464.1 L873.5 464.8 L875.5 465.7 L877.5 466.7 L879.5 467.9 L881.5 469.2 L883.5 470.7 L885.5 472.3 L887.4 474.1 L889.3 476.0 L891.1 478.0 L892.9 480.1 L894.6 482.3 L896.2 484.6 L897.7 487.0 L899.2 489.4 L900.5 491.9 L901.7 494.4 L902.8 497.0 L903.8 499.6 L904.7 502.1 L905.4 504.7 L906.0 507.2 L906.4 509.7 L906.7 512.2 L906.9 514.6 L906.9 516.9 L906.8 519.2 L906.6 521.3 L906.2 523.4 L905.7 525.3 L905.0 527.1 L904.2 528.8 L903.3 530.3 L902.3 531.7 L901.1 532.9 L899.9 534.0 L898.5 534.9 L870.5 550.9 L869.0 551.7 L867.4 552.2 L865.8 552.6 L864.0 552.8 L862.2 552.9 L860.4 552.7 L858.5 552.4 L856.5 551.9 L854.5 551.2 L852.5 550.3 L850.5 549.3 L848.5 548.1 L846.5 546.8 L844.5 545.3 L842.5 543.7 L840.6 541.9 L838.7 540.0 L836.9 538.0 L835.1 535.9 L833.4 533.7 L831.8 531.4 L830.3 529.0 L828.8 526.6 L827.5 524.1 L826.3 521.6 L825.2 519.0 L824.2 516.4 L823.3 513.9 L822.6 511.3 L822.0 508.8 L821.6 506.3 L821.3 503.8 L821.1 501.4 L821.1 499.1 L821.2 496.8 L821.4 494.7 L821.8 492.6 L822.3 490.7 L823.0 488.9 L823.8 487.2 L824.7 485.7 L825.7 484.3 L826.9 483.1 L828.1 482.0 L829.5 481.1 Z" fill="url(#gyel)"/>
<path d="M879.0 532.4 L878.9 530.0 L878.7 527.6 L878.3 525.1 L877.8 522.6 L877.2 520.1 L876.4 517.5 L875.6 514.9 L874.6 512.4 L873.4 509.8 L872.2 507.3 L870.8 504.8 L869.4 502.4 L867.8 500.0 L866.2 497.8 L864.5 495.6 L862.7 493.5 L860.8 491.5 L858.9 489.6 L857.0 487.9 L855.0 486.3 L853.0 484.9 L851.0 483.6 L849.0 482.4 L847.0 481.4 L845.0 480.6 L843.0 480.0 L841.1 479.5 L839.2 479.2 L837.3 479.1 L835.5 479.2 L833.8 479.5 L832.2 479.9 L830.6 480.5 L829.2 481.3 L827.8 482.2 L826.6 483.4 L825.4 484.6 L824.4 486.1 L823.6 487.6 L822.8 489.3 L822.2 491.2 L821.7 493.1 L821.3 495.2 L821.1 497.4 L821.0 499.6 L821.1 502.0 L821.3 504.4 L821.7 506.9 L822.2 509.4 L822.8 511.9 L823.6 514.5 L824.4 517.1 L825.4 519.6 L826.6 522.2 L827.8 524.7 L829.2 527.2 L830.6 529.6 L832.2 532.0 L833.8 534.2 L835.5 536.4 L837.3 538.5 L839.2 540.5 L841.1 542.4 L843.0 544.1 L845.0 545.7 L847.0 547.1 L849.0 548.4 L851.0 549.6 L853.0 550.6 L855.0 551.4 L857.0 552.0 L858.9 552.5 L860.8 552.8 L862.7 552.9 L864.5 552.8 L866.2 552.5 L867.8 552.1 L869.4 551.5 L870.8 550.7 L872.2 549.8 L873.4 548.6 L874.6 547.4 L875.6 545.9 L876.4 544.4 L877.2 542.7 L877.8 540.8 L878.3 538.9 L878.7 536.8 L878.9 534.6 L879.0 532.4 Z" fill="#c8b4ad"/>
<path d="M878.0 441.0 L881.6 443.2 L885.2 445.6 L888.7 448.4 L892.3 451.3 L895.7 454.5 L899.0 458.0 L902.3 461.6 L905.4 465.4 L908.4 469.4 L911.2 473.6 L913.9 477.8 L916.4 482.2 L918.7 486.7 L920.9 491.2 L922.8 495.8 L924.5 500.4 L925.9 505.0 L927.2 509.5 L928.2 514.1 L928.9 518.5 L929.4 522.9 L929.7 527.1 L929.7 531.2 L929.4 535.2 L928.9 539.0 L928.2 542.6 L927.2 546.0 L925.9 549.2 L924.5 552.1 L922.8 554.8 L920.9 557.2 L918.7 559.3 L916.4 561.2 L913.9 562.7 L911.2 564.0 L908.4 564.9 L905.4 565.5 L902.3 565.8 L899.0 565.8 L895.7 565.4 L892.3 564.8 L888.7 563.8 L885.2 562.5 L881.6 560.9 L878.0 559.0 L652.0 429.0 L648.4 426.8 L644.8 424.4 L641.3 421.6 L637.7 418.7 L634.3 415.5 L631.0 412.0 L627.7 408.4 L624.6 404.6 L621.6 400.6 L618.8 396.4 L616.1 392.2 L613.6 387.8 L611.3 383.3 L609.1 378.8 L607.2 374.2 L605.5 369.6 L604.1 365.0 L602.8 360.5 L601.8 355.9 L601.1 351.5 L600.6 347.1 L600.3 342.9 L600.3 338.8 L600.6 334.8 L601.1 331.0 L601.8 327.4 L602.8 324.0 L604.1 320.8 L605.5 317.9 L607.2 315.2 L609.1 312.8 L611.3 310.7 L613.6 308.8 L616.1 307.3 L618.8 306.0 L621.6 305.1 L624.6 304.5 L627.7 304.2 L631.0 304.2 L634.3 304.6 L637.7 305.2 L641.3 306.2 L644.8 307.5 L648.4 309.1 L652.0 311.0 Z" fill="none" stroke="#4b9be6" stroke-width="1.3"/>
<path d="M681.0 386.4 L680.9 384.0 L680.7 381.6 L680.3 379.1 L679.8 376.6 L679.2 374.1 L678.4 371.5 L677.6 368.9 L676.6 366.4 L675.4 363.8 L674.2 361.3 L672.8 358.8 L671.4 356.4 L669.8 354.0 L668.2 351.8 L666.5 349.6 L664.7 347.5 L662.8 345.5 L660.9 343.6 L659.0 341.9 L657.0 340.3 L655.0 338.9 L653.0 337.6 L651.0 336.4 L649.0 335.4 L647.0 334.6 L645.0 334.0 L643.1 333.5 L641.2 333.2 L639.3 333.1 L637.5 333.2 L635.8 333.5 L634.2 333.9 L632.6 334.5 L631.2 335.3 L629.8 336.2 L628.6 337.4 L627.4 338.6 L626.4 340.1 L625.6 341.6 L624.8 343.3 L624.2 345.2 L623.7 347.1 L623.3 349.2 L623.1 351.4 L623.0 353.6 L623.1 356.0 L623.3 358.4 L623.7 360.9 L624.2 363.4 L624.8 365.9 L625.6 368.5 L626.4 371.1 L627.4 373.6 L628.6 376.2 L629.8 378.7 L631.2 381.2 L632.6 383.6 L634.2 386.0 L635.8 388.2 L637.5 390.4 L639.3 392.5 L641.2 394.5 L643.1 396.4 L645.0 398.1 L647.0 399.7 L649.0 401.1 L651.0 402.4 L653.0 403.6 L655.0 404.6 L657.0 405.4 L659.0 406.0 L660.9 406.5 L662.8 406.8 L664.7 406.9 L666.5 406.8 L668.2 406.5 L669.8 406.1 L671.4 405.5 L672.8 404.7 L674.2 403.8 L675.4 402.6 L676.6 401.4 L677.6 399.9 L678.4 398.4 L679.2 396.7 L679.8 394.8 L680.3 392.9 L680.7 390.8 L680.9 388.6 L681.0 386.4 Z" fill="none" stroke="#5aa6ee" stroke-width="1.1"/>
<path d="M907.0 516.4 L906.9 514.0 L906.7 511.6 L906.3 509.1 L905.8 506.6 L905.2 504.1 L904.4 501.5 L903.6 498.9 L902.6 496.4 L901.4 493.8 L900.2 491.3 L898.8 488.8 L897.4 486.4 L895.8 484.0 L894.2 481.8 L892.5 479.6 L890.7 477.5 L888.8 475.5 L886.9 473.6 L885.0 471.9 L883.0 470.3 L881.0 468.9 L879.0 467.6 L877.0 466.4 L875.0 465.4 L873.0 464.6 L871.0 464.0 L869.1 463.5 L867.2 463.2 L865.3 463.1 L863.5 463.2 L861.8 463.5 L860.2 463.9 L858.6 464.5 L857.2 465.3 L855.8 466.2 L854.6 467.4 L853.4 468.6 L852.4 470.1 L851.6 471.6 L850.8 473.3 L850.2 475.2 L849.7 477.1 L849.3 479.2 L849.1 481.4 L849.0 483.6 L849.1 486.0 L849.3 488.4 L849.7 490.9 L850.2 493.4 L850.8 495.9 L851.6 498.5 L852.4 501.1 L853.4 503.6 L854.6 506.2 L855.8 508.7 L857.2 511.2 L858.6 513.6 L860.2 516.0 L861.8 518.2 L863.5 520.4 L865.3 522.5 L867.2 524.5 L869.1 526.4 L871.0 528.1 L873.0 529.7 L875.0 531.1 L877.0 532.4 L879.0 533.6 L881.0 534.6 L883.0 535.4 L885.0 536.0 L886.9 536.5 L888.8 536.8 L890.7 536.9 L892.5 536.8 L894.2 536.5 L895.8 536.1 L897.4 535.5 L898.8 534.7 L900.2 533.8 L901.4 532.6 L902.6 531.4 L903.6 529.9 L904.4 528.4 L905.2 526.7 L905.8 524.8 L906.3 522.9 L906.7 520.8 L906.9 518.6 L907.0 516.4 Z" fill="none" stroke="#86b2e4" stroke-width="1"/>
<path d="M659.4 307.1 L657.5 400.0 L658.6 435.4 L668.5 470.6" fill="none" stroke="#1a2a20" stroke-width="1" opacity="0.85" clip-path="url(#clink)"/>
<clipPath id="clink"><path d="M652.0 311.0 L878.0 441.0 L881.7 443.2 L885.4 445.8 L889.0 448.6 L892.6 451.6 L896.1 454.9 L899.5 458.5 L902.8 462.2 L906.0 466.2 L909.0 470.3 L911.9 474.5 L914.6 478.9 L917.1 483.4 L919.4 488.0 L921.5 492.7 L923.4 497.4 L925.0 502.1 L926.4 506.7 L927.6 511.4 L928.5 516.0 L929.2 520.5 L929.6 524.9 L929.7 529.2 L929.6 533.3 L929.2 537.3 L928.5 541.1 L927.6 544.6 L926.4 548.0 L925.0 551.1 L923.4 553.9 L921.5 556.5 L919.4 558.7 L917.1 560.7 L914.6 562.4 L886.6 578.4 L883.9 579.7 L881.0 580.7 L878.0 581.4 L874.8 581.8 L871.5 581.8 L868.1 581.5 L864.6 580.8 L861.0 579.9 L857.4 578.6 L853.7 576.9 L850.0 575.0 L624.0 445.0 L620.3 442.8 L616.6 440.2 L613.0 437.4 L609.4 434.4 L605.9 431.1 L602.5 427.5 L599.2 423.8 L596.0 419.8 L593.0 415.7 L590.1 411.5 L587.4 407.1 L584.9 402.6 L582.6 398.0 L580.5 393.3 L578.6 388.6 L577.0 383.9 L575.6 379.3 L574.4 374.6 L573.5 370.0 L572.8 365.5 L572.4 361.1 L572.3 356.8 L572.4 352.7 L572.8 348.7 L573.5 344.9 L574.4 341.4 L575.6 338.0 L577.0 334.9 L578.6 332.1 L580.5 329.5 L582.6 327.3 L584.9 325.3 L587.4 323.6 L615.4 307.6 L618.1 306.3 L621.0 305.3 L624.0 304.6 L627.2 304.2 L630.5 304.2 L633.9 304.5 L637.4 305.2 L641.0 306.1 L644.6 307.4 L648.3 309.1 L652.0 311.0 Z"/></clipPath>
<path d="M850.0 457.0 L853.6 459.2 L857.2 461.6 L860.7 464.4 L864.3 467.3 L867.7 470.5 L871.0 474.0 L874.3 477.6 L877.4 481.4 L880.4 485.4 L883.2 489.6 L885.9 493.8 L888.4 498.2 L890.7 502.7 L892.9 507.2 L894.8 511.8 L896.5 516.4 L897.9 521.0 L899.2 525.5 L900.2 530.1 L900.9 534.5 L901.4 538.9 L901.7 543.1 L901.7 547.2 L901.4 551.2 L900.9 555.0 L900.2 558.6 L899.2 562.0 L897.9 565.2 L896.5 568.1 L894.8 570.8 L892.9 573.2 L890.7 575.3 L888.4 577.2 L885.9 578.7 L883.2 580.0 L880.4 580.9 L877.4 581.5 L874.3 581.8 L871.0 581.8 L867.7 581.4 L864.3 580.8 L860.7 579.8 L857.2 578.5 L853.6 576.9 L850.0 575.0 L624.0 445.0 L620.4 442.8 L616.8 440.4 L613.3 437.6 L609.7 434.7 L606.3 431.5 L603.0 428.0 L599.7 424.4 L596.6 420.6 L593.6 416.6 L590.8 412.4 L588.1 408.2 L585.6 403.8 L583.3 399.3 L581.1 394.8 L579.2 390.2 L577.5 385.6 L576.1 381.0 L574.8 376.5 L573.8 371.9 L573.1 367.5 L572.6 363.1 L572.3 358.9 L572.3 354.8 L572.6 350.8 L573.1 347.0 L573.8 343.4 L574.8 340.0 L576.1 336.8 L577.5 333.9 L579.2 331.2 L581.1 328.8 L583.3 326.7 L585.6 324.8 L588.1 323.3 L590.8 322.0 L593.6 321.1 L596.6 320.5 L599.7 320.2 L603.0 320.2 L606.3 320.6 L609.7 321.2 L613.3 322.2 L616.8 323.5 L620.4 325.1 L624.0 327.0 Z M886.6 578.4 L914.6 562.4 M624.0 327.0 L652.0 311.0 M624.0 445.0 L652.0 429.0 M603.5 351.1 L631.5 335.1 M644.5 420.9 L672.5 404.9 M850.0 457.0 L878.0 441.0 M850.0 575.0 L878.0 559.0 M829.5 481.1 L857.5 465.1 M870.5 550.9 L898.5 534.9" fill="none" stroke="#111" stroke-width="1.1"/>
<path d="M653.0 402.4 L652.9 400.0 L652.7 397.6 L652.3 395.1 L651.8 392.6 L651.2 390.1 L650.4 387.5 L649.6 384.9 L648.6 382.4 L647.4 379.8 L646.2 377.3 L644.8 374.8 L643.4 372.4 L641.8 370.0 L640.2 367.8 L638.5 365.6 L636.7 363.5 L634.8 361.5 L632.9 359.6 L631.0 357.9 L629.0 356.3 L627.0 354.9 L625.0 353.6 L623.0 352.4 L621.0 351.4 L619.0 350.6 L617.0 350.0 L615.1 349.5 L613.2 349.2 L611.3 349.1 L609.5 349.2 L607.8 349.5 L606.2 349.9 L604.6 350.5 L603.2 351.3 L601.8 352.2 L600.6 353.4 L599.4 354.6 L598.4 356.1 L597.6 357.6 L596.8 359.3 L596.2 361.2 L595.7 363.1 L595.3 365.2 L595.1 367.4 L595.0 369.6 L595.1 372.0 L595.3 374.4 L595.7 376.9 L596.2 379.4 L596.8 381.9 L597.6 384.5 L598.4 387.1 L599.4 389.6 L600.6 392.2 L601.8 394.7 L603.2 397.2 L604.6 399.6 L606.2 402.0 L607.8 404.2 L609.5 406.4 L611.3 408.5 L613.2 410.5 L615.1 412.4 L617.0 414.1 L619.0 415.7 L621.0 417.1 L623.0 418.4 L625.0 419.6 L627.0 420.6 L629.0 421.4 L631.0 422.0 L632.9 422.5 L634.8 422.8 L636.7 422.9 L638.5 422.8 L640.2 422.5 L641.8 422.1 L643.4 421.5 L644.8 420.7 L646.2 419.8 L647.4 418.6 L648.6 417.4 L649.6 415.9 L650.4 414.4 L651.2 412.7 L651.8 410.8 L652.3 408.9 L652.7 406.8 L652.9 404.6 L653.0 402.4 Z" fill="none" stroke="#111" stroke-width="1.1"/>
<path d="M879.0 532.4 L878.9 530.0 L878.7 527.6 L878.3 525.1 L877.8 522.6 L877.2 520.1 L876.4 517.5 L875.6 514.9 L874.6 512.4 L873.4 509.8 L872.2 507.3 L870.8 504.8 L869.4 502.4 L867.8 500.0 L866.2 497.8 L864.5 495.6 L862.7 493.5 L860.8 491.5 L858.9 489.6 L857.0 487.9 L855.0 486.3 L853.0 484.9 L851.0 483.6 L849.0 482.4 L847.0 481.4 L845.0 480.6 L843.0 480.0 L841.1 479.5 L839.2 479.2 L837.3 479.1 L835.5 479.2 L833.8 479.5 L832.2 479.9 L830.6 480.5 L829.2 481.3 L827.8 482.2 L826.6 483.4 L825.4 484.6 L824.4 486.1 L823.6 487.6 L822.8 489.3 L822.2 491.2 L821.7 493.1 L821.3 495.2 L821.1 497.4 L821.0 499.6 L821.1 502.0 L821.3 504.4 L821.7 506.9 L822.2 509.4 L822.8 511.9 L823.6 514.5 L824.4 517.1 L825.4 519.6 L826.6 522.2 L827.8 524.7 L829.2 527.2 L830.6 529.6 L832.2 532.0 L833.8 534.2 L835.5 536.4 L837.3 538.5 L839.2 540.5 L841.1 542.4 L843.0 544.1 L845.0 545.7 L847.0 547.1 L849.0 548.4 L851.0 549.6 L853.0 550.6 L855.0 551.4 L857.0 552.0 L858.9 552.5 L860.8 552.8 L862.7 552.9 L864.5 552.8 L866.2 552.5 L867.8 552.1 L869.4 551.5 L870.8 550.7 L872.2 549.8 L873.4 548.6 L874.6 547.4 L875.6 545.9 L876.4 544.4 L877.2 542.7 L877.8 540.8 L878.3 538.9 L878.7 536.8 L878.9 534.6 L879.0 532.4 Z" fill="none" stroke="#111" stroke-width="1.8"/>
</svg>
<!-- PANEL -->
<div class="a" style="left:0;top:61px;width:269px;height:803px;background:#f5f5f5"></div>
<div class="a" style="left:269px;top:61px;width:1px;height:803px;background:#a0a0a0"></div>
<div class="a" style="left:0;top:61px;width:50px;height:22px;font-size:13.5px;line-height:21px;text-align:center;color:#222">装配体</div>
<div class="tab" style="left:50.0px;width:57.5px">布局</div>
<div class="tab" style="left:106.5px;width:57.5px">草图</div>
<div class="tab" style="left:163.0px;width:56.5px">评估</div>
<div class="tab" style="left:218.5px;width:118.0px"><span style="font-size:12px;letter-spacing:-0.6px">SOLIDWORKS</span> 插件</div>
<div class="tab" style="left:335.5px;width:74.0px"><span style="font-size:12.2px">Simulation</span></div>
<div class="tab" style="left:408.5px;width:57.5px"><span style="font-size:12.2px">MBD</span></div>
<div class="a" style="left:465px;top:60px;width:3px;height:53px;background:#1b1b1b"></div>
<div class="a" style="left:0;top:82px;width:269px;height:1px;background:#a9a9a9"></div>

<div class="a" style="left:0;top:85px;width:26px;height:3px;background:repeating-linear-gradient(90deg,#8c8c8c 0 2px,transparent 2px 4px)"></div>
<svg class="a" style="left:0;top:95px" width="26" height="50" viewBox="0 0 26 50"><g fill="none" stroke="#b4b4b4" stroke-width="1.3">
<path d="M2.5 21 L2.5 17 L6 17 L6 13.5 L8 13.5 L8 10 L13 10 L13 15 L17 15 L17 11"/><rect x="15.5" y="5" width="5" height="5" fill="#d0d0d0"/><path d="M2.5 21 L13 21 L13 17 L10 17 L10 13"/>
<path d="M2 44.5 L6 44.5 L6 36.5 L14 36.5 L14 44.5 L20 44.5"/></g></svg>
<div class="a" style="left:0;top:155px;width:25px;height:1px;background:#9c9c9c"></div>
<div class="a" style="left:27px;top:87px;width:242px;height:1px;background:#c4c4c4"></div>
<div class="a" style="left:143px;top:90px;width:6px;height:6px;border-radius:50%;background:#b8b8b8;border:1px solid #9a9a9a"></div>
<div class="a" style="left:27px;top:102px;width:242px;height:1px;background:#c4c4c4"></div>
<div class="a" style="left:29px;top:107px;width:41px;height:26px;background:#d6d6d6;border:1px solid #9a9a9a;border-bottom:1px solid #9a9a9a"></div>
<div class="a" style="left:69px;top:107px;width:41px;height:26px;background:#f6f6f6;border:1px solid #9a9a9a;border-bottom:none"></div>
<div class="a" style="left:109px;top:107px;width:41px;height:26px;background:#d6d6d6;border:1px solid #9a9a9a;border-bottom:1px solid #9a9a9a"></div>
<div class="a" style="left:149px;top:107px;width:41px;height:26px;background:#d6d6d6;border:1px solid #9a9a9a;border-bottom:1px solid #9a9a9a"></div>
<div class="a" style="left:189px;top:107px;width:41px;height:26px;background:#d6d6d6;border:1px solid #9a9a9a;border-bottom:1px solid #9a9a9a"></div>
<div class="a" style="left:28px;top:132px;width:41px;height:1px;background:#9a9a9a"></div>
<div class="a" style="left:109px;top:132px;width:158px;height:1px;background:#9a9a9a"></div>
<svg class="a" style="left:39px;top:110px" width="22" height="20" viewBox="0 0 22 20">
<path d="M2 8 L7 5 L9 6 L9 11 L19 11 L19 16 L12 19 L2 14 Z" fill="#f2c81c" stroke="#2a2a2a" stroke-width="1.2" stroke-linejoin="round"/>
<path d="M2 8 L12 13 L12 19 M12 13 L19 11" fill="none" stroke="#2a2a2a" stroke-width="1"/>
<path d="M9 5 L14 2.5 L19 5 L19 11 L14 13.5 L9 11 Z" fill="#6ab7e8" stroke="#1f3f66" stroke-width="1.2" stroke-linejoin="round"/>
<path d="M9 5 L14 7.5 L19 5 M14 7.5 L14 13.5" fill="none" stroke="#1f3f66" stroke-width="1"/>
</svg>
<svg class="a" style="left:79px;top:110px" width="20" height="20" viewBox="0 0 20 20">
<rect x="2" y="2.5" width="16" height="15" fill="#f4f8fb" stroke="#1c4868" stroke-width="1.6"/><rect x="2" y="2.5" width="16" height="3" fill="#2a6b9a"/>
<rect x="4.5" y="8" width="2.5" height="1.8" fill="#3585c0"/><rect x="4.5" y="11" width="2.5" height="1.8" fill="#3585c0"/><rect x="4.5" y="14" width="2.5" height="1.8" fill="#3585c0"/>
<path d="M8.5 9 H15.5 M8.5 12 H15.5 M8.5 15 H15.5" stroke="#1c4868" stroke-width="1.2"/></svg>
<svg class="a" style="left:119px;top:110px" width="20" height="20" viewBox="0 0 20 20"><g fill="#fff" stroke="#1b1b1b" stroke-width="1.4">
<path d="M5 2 V18 M5 2 H8 M5 10 H9 M5 18 H8" fill="none"/><rect x="9" y="5.5" width="5" height="5"/><rect x="11" y="12.5" width="5" height="5"/><rect x="6.5" y="2" width="4" height="4"/></g></svg>
<svg class="a" style="left:159px;top:110px" width="20" height="20" viewBox="0 0 20 20"><g fill="none" stroke="#1b1b1b" stroke-width="2"><circle cx="10" cy="10" r="6"/><path d="M10 1 V19 M1 10 H19"/></g></svg>
<svg class="a" style="left:199px;top:110px" width="20" height="20" viewBox="0 0 20 20">
<circle cx="10" cy="10" r="8.5" fill="#e8c414"/><path d="M10 10 L1.5 10 A8.5 8.5 0 0 1 6 2.5 Z" fill="#2fa14a"/><path d="M10 10 L6 2.5 A8.5 8.5 0 0 1 15 3 Z" fill="#d8262a"/><path d="M10 10 L15 3 A8.5 8.5 0 0 1 18.5 10 Z" fill="#1f1f1f"/><path d="M10 10 L1.5 10 A8.5 8.5 0 0 0 10 18.5 Z" fill="#2f6fd0"/><circle cx="13" cy="6" r="2.5" fill="#111"/></svg>
<svg class="a" style="left:36px;top:139px" width="20" height="20" viewBox="0 0 20 20"><path d="M5.5 7 L12.5 15.5 C14 17.3 16.8 17 17.3 15 C17.8 13.4 17 12.5 16.2 11.5 L8.5 2.8 C7.3 1.5 5.3 1.6 4.6 3 C4 4.2 4.5 5.3 5.3 6.2 L12.3 14.2 C13 15 14.2 14.9 14.5 14 C14.7 13.4 14.4 12.9 14 12.4 L7.8 5.5" fill="none" stroke="#2b2b2b" stroke-width="1.5" stroke-linecap="round"/></svg>
<div class="a" style="left:61px;top:140px;font-size:14px;font-weight:bold;color:#111;letter-spacing:0.5px">配合</div>
<svg class="a" style="left:238px;top:140px" width="19" height="19" viewBox="0 0 19 19"><circle cx="9.5" cy="9.5" r="7.6" fill="#fafafa" stroke="#2d4a63" stroke-width="1.6"/><text x="9.5" y="14" text-anchor="middle" font-family="Liberation Sans" font-weight="bold" font-size="12" fill="#2d4a63">?</text></svg>
<svg class="a" style="left:33px;top:167px" width="18" height="18" viewBox="0 0 18 18"><path d="M2.5 9.5 L6.8 13.8 L14.5 4.5" fill="none" stroke="#3f8f2a" stroke-width="2.7" stroke-linejoin="miter"/></svg>
<svg class="a" style="left:60px;top:167px" width="18" height="18" viewBox="0 0 18 18"><path d="M4 4.5 L13.5 14 M13.5 4.5 L4 14" fill="none" stroke="#c9261c" stroke-width="2.3"/></svg>
<svg class="a" style="left:85px;top:165px" width="22" height="22" viewBox="0 0 22 22"><path d="M7 8 C12 5 18.5 6.5 18.5 12.5 C18.5 15 17.5 17 16 18.5" fill="none" stroke="#a9a9a9" stroke-width="5" stroke-linecap="butt"/><path d="M7 8 C12 5 18.5 6.5 18.5 12.5 C18.5 15 17.5 17 16 18.5" fill="none" stroke="#d4d4d4" stroke-width="3" stroke-linecap="butt"/><path d="M2 3.5 L10.5 3.5 L3 11 Z" fill="#d4d4d4" stroke="#a9a9a9" stroke-width="1" stroke-linejoin="round"/></svg>
<div class="a" style="left:111px;top:164px;width:24px;height:24px;background:#b5b5b5;border:1px solid #6e6e6e"></div>
<svg class="a" style="left:114px;top:167px" width="18" height="18" viewBox="0 0 18 18"><g fill="#2a86b5"><path d="M10.5 1.5 L16.5 7.5 L15 9 L9 3 Z"/><path d="M11 3.5 L14.5 7 L10.5 11 L7 7.5 Z"/><path d="M4.5 7.5 L10.5 13.5 L9 15 L3 9 Z"/></g><path d="M6 12 L2 16" stroke="#2a86b5" stroke-width="2.2" stroke-linecap="round"/></svg>
<div class="a" style="left:29px;top:199px;width:65px;height:25px;background:#f7f7f7;border:1px solid #a3a3a3;border-bottom:none;border-right:none"></div>
<div class="a" style="left:93px;top:199px;width:64px;height:25px;background:#d6d6d6;border:1px solid #9a9a9a;border-bottom:none"></div>
<div class="a" style="left:28px;top:223px;width:239px;height:1px;background:#a8a8a8"></div>
<div class="a" style="left:29px;top:223px;width:64px;height:1px;background:#f7f7f7"></div>
<svg class="a" style="left:35px;top:202px" width="19" height="19" viewBox="0 0 20 20"><path d="M5.5 7 L12.5 15.5 C14 17.3 16.8 17 17.3 15 C17.8 13.4 17 12.5 16.2 11.5 L8.5 2.8 C7.3 1.5 5.3 1.6 4.6 3 C4 4.2 4.5 5.3 5.3 6.2 L12.3 14.2 C13 15 14.2 14.9 14.5 14 C14.7 13.4 14.4 12.9 14 12.4 L7.8 5.5" fill="none" stroke="#2b2b2b" stroke-width="1.5" stroke-linecap="round"/></svg>
<div class="a" style="left:61px;top:203px;font-size:13.5px;color:#333">配合</div>
<svg class="a" style="left:99px;top:201px" width="22" height="21" viewBox="0 0 22 21"><g fill="none" stroke="#555" stroke-width="1.6"><circle cx="14" cy="7" r="4.5"/><circle cx="14" cy="7" r="1.5"/><circle cx="7" cy="14" r="4.5"/><circle cx="7" cy="14" r="1.5"/></g><g stroke="#555" stroke-width="2"><path d="M14 1 V2.5 M14 11.5 V13 M8 7 H9.5 M18.5 7 H20 M7 8 V9.5 M7 18.5 V20 M1 14 H2.5 M11.5 14 H13"/></g></svg>
<div class="a" style="left:125px;top:203px;font-size:13.5px;color:#444">分析</div>
<div class="hline" style="top:240px"></div>
<div class="hdr" style="top:246px">配合选择<small>(S)</small></div>
<svg class="a" style="left:248px;top:249px" width="12" height="9" viewBox="0 0 12 9"><path d="M1 7 L6 2 L11 7" fill="none" stroke="#555" stroke-width="1.6"/></svg>
<svg class="a" style="left:36px;top:269px" width="22" height="22" viewBox="0 0 22 22">
<path d="M10 3 L13.5 1.5 L20 3 L20 9 L16.5 10.5 L10 9 Z" fill="#a9d4f0" stroke="#2a5d88" stroke-width="1"/><path d="M2 11 L5.5 9.5 L11 11 L11 17 L7.5 18.5 L2 17 Z" fill="#6db3e3" stroke="#2a5d88" stroke-width="1"/>
<path d="M12 13 L18 13 L18 9.5 M16 15.5 L11 15.5 L13 13.5 M11 15.5 L13 17.5" fill="none" stroke="#111" stroke-width="1.5"/></svg>
<div class="a" style="left:36px;top:296px;width:24px;height:24px;border:1px solid #8f8f8f;background:#fafafa"></div>
<svg class="a" style="left:38px;top:298px" width="20" height="20" viewBox="0 0 20 20"><path d="M3.5 9 L9.5 16 C10.6 17.3 12.5 17 12.8 15.6 C13 14.6 12.5 14 12 13.3 L6.5 7 C5.7 6 4.3 6.2 3.9 7.1 C3.6 7.8 3.9 8.4 4.4 9 L9.2 14.5" fill="none" stroke="#333" stroke-width="1.4"/><path d="M10 2 L17 2 L13 7 L17 7 L9 16 L12 9 L8.5 9 Z" fill="#f3b51e" stroke="#b37a00" stroke-width="0.6"/></svg>
<div class="a" style="left:63px;top:268px;width:11px;height:43px;background:#5aa7ea"></div>
<div class="a" style="left:75px;top:268px;width:177px;height:43px;background:#cfe5f8;border:2px solid #6cb4ee"></div>
<div class="a" style="left:77px;top:271px;width:172px;height:16px;background:#0a72d0"></div>
<div class="a" style="left:78px;top:271px;font-size:12px;line-height:15px;color:#fff;white-space:nowrap">面<span style="font-size:11px">&lt;1&gt;</span>@曲柄<span style="font-size:11.5px">-1</span></div>
<div class="hline" style="top:331px"></div>
<div class="hdr" style="top:337px">标准配合<small>(A)</small></div>
<svg class="a" style="left:248px;top:340px" width="12" height="9" viewBox="0 0 12 9"><path d="M1 7 L6 2 L11 7" fill="none" stroke="#555" stroke-width="1.6"/></svg>
<div class="mbtn" style="top:358px"></div>
<svg class="a" style="left:37px;top:359px" width="22" height="22" viewBox="0 0 22 22"><path d="M4 17 L11.5 9.5 L17 19" fill="none" stroke="#2f5a6e" stroke-width="2"/><rect x="9.5" y="7" width="4" height="4" fill="#fff" stroke="#1b1b1b" stroke-width="1.1"/><path d="M12.5 8 L16 4" stroke="#2f5a6e" stroke-width="2"/></svg>
<div class="mlbl" style="top:362px">重合<small>(C)</small></div>
<div class="mbtn" style="top:390px"></div>
<svg class="a" style="left:37px;top:391px" width="22" height="22" viewBox="0 0 22 22"><path d="M3.5 7 L14.5 18 M7.5 3.5 L19 15" stroke="#2f5a6e" stroke-width="2.2"/></svg>
<div class="mlbl" style="top:394px">平行<small>(R)</small></div>
<div class="mbtn" style="top:421px"></div>
<svg class="a" style="left:37px;top:422px" width="22" height="22" viewBox="0 0 22 22"><path d="M11 3 L11 18.5 M3 18.5 L19 18.5" stroke="#2f5a6e" stroke-width="2.2"/></svg>
<div class="mlbl" style="top:425px">垂直<small>(P)</small></div>
<div class="mbtn" style="top:452px"></div>
<svg class="a" style="left:37px;top:453px" width="22" height="22" viewBox="0 0 22 22"><circle cx="8" cy="15" r="4.8" fill="none" stroke="#1b1b1b" stroke-width="2"/><path d="M6 3.5 L19 16" stroke="#2f5a6e" stroke-width="2.2"/></svg>
<div class="mlbl" style="top:456px">相切<small>(T)</small></div>
<svg class="a" style="left:37px;top:486px" width="22" height="22" viewBox="0 0 22 22"><circle cx="11" cy="11" r="8.5" fill="none" stroke="#c4c4c4" stroke-width="2"/><circle cx="11" cy="11" r="4.3" fill="none" stroke="#c4c4c4" stroke-width="2"/></svg>
<div class="mlbl" style="top:489px;color:#8a8a8a">同轴心<small>(N)</small></div>
<div class="mbtn" style="top:518px"></div>
<svg class="a" style="left:37px;top:519px" width="22" height="22" viewBox="0 0 22 22"><path d="M6.5 10 V7.5 C6.5 4.5 8.5 3 11 3 C13.5 3 15.5 4.5 15.5 7.5 V10" fill="none" stroke="#333" stroke-width="1.8"/><rect x="4.5" y="10" width="13" height="9.5" rx="1" fill="#3a8fbf" stroke="#1e4f6e" stroke-width="1"/><rect x="4.5" y="10" width="13" height="3" fill="#7cc0e4"/><rect x="10.2" y="14" width="1.6" height="3.5" fill="#173b52"/></svg>
<div class="mlbl" style="top:522px">锁定<small>(O)</small></div>
<div class="mbtn" style="top:548px"></div>
<svg class="a" style="left:37px;top:549px" width="22" height="22" viewBox="0 0 22 22"><path d="M4 3.5 V18.5 M18 3.5 V18.5" stroke="#2f5a6e" stroke-width="2.2"/><path d="M6 11 H16" stroke="#111" stroke-width="1.4"/><path d="M5.5 11 L9 8.5 V13.5 Z M16.5 11 L13 8.5 V13.5 Z" fill="#111"/></svg>
<div class="a" style="left:65px;top:550px;width:185px;height:21px;background:#ececec;border:1px solid #b3b3b3"></div>
<div class="a" style="left:67px;top:553px;font-size:11.5px;color:#8a8a8a;white-space:nowrap">1.00mm</div>
<div class="a" style="left:232px;top:552px;width:15px;height:17px;background:#f3f3f3;border:1px solid #a9a9a9"></div>
<div class="a" style="left:233px;top:560px;width:13px;height:1px;background:#a9a9a9"></div>
<svg class="a" style="left:235px;top:554px" width="9" height="14" viewBox="0 0 9 14"><path d="M1.5 5 L4.5 2 L7.5 5 Z M1.5 9 L4.5 12 L7.5 9 Z" fill="#111"/></svg>
<div class="mbtn" style="top:580px"></div>
<svg class="a" style="left:37px;top:581px" width="22" height="22" viewBox="0 0 22 22"><path d="M3 18.5 H17 M3 18.5 L10 5" fill="none" stroke="#2f7aa8" stroke-width="2"/><path d="M12.5 4.5 H16.5 V11" fill="none" stroke="#111" stroke-width="1.6"/><path d="M13.5 10 L19.5 10 L16.5 14 Z" fill="#111"/></svg>
<div class="a" style="left:65px;top:582px;width:185px;height:21px;background:#ececec;border:1px solid #b3b3b3"></div>
<div class="a" style="left:67px;top:585px;font-size:11.5px;color:#8a8a8a;white-space:nowrap">30.00<span style="font-size:12px">度</span></div>
<div class="a" style="left:232px;top:584px;width:15px;height:17px;background:#f3f3f3;border:1px solid #a9a9a9"></div>
<div class="a" style="left:233px;top:592px;width:13px;height:1px;background:#a9a9a9"></div>
<svg class="a" style="left:235px;top:586px" width="9" height="14" viewBox="0 0 9 14"><path d="M1.5 5 L4.5 2 L7.5 5 Z M1.5 9 L4.5 12 L7.5 9 Z" fill="#111"/></svg>
<div class="mlbl" style="left:62px;top:611px;color:#a8a8a8">配合对齐:</div>
<svg class="a" style="left:76px;top:635px" width="22" height="20" viewBox="0 0 22 20"><g fill="none" stroke="#b0b0b0" stroke-width="1.5"><path d="M3 1.5 H8 V8 H6 V18 M3 1.5 V8 H5"/><rect x="12" y="1.5" width="6" height="6.5"/><path d="M15 8 V18"/></g><path d="M3 14 L6 18 L9 14 M12 14 L15 18 L18 14" fill="none" stroke="#b0b0b0" stroke-width="1.5"/></svg>
<svg class="a" style="left:112px;top:635px" width="22" height="20" viewBox="0 0 22 20"><g fill="none" stroke="#b0b0b0" stroke-width="1.5"><path d="M3 1.5 H8 V8 H6 V18 M3 1.5 V8 H5"/><rect x="12" y="11" width="6" height="7"/><path d="M15 2 V11"/></g><path d="M3 14 L6 18 L9 14 M12 5.5 L15 1.5 L18 5.5" fill="none" stroke="#b0b0b0" stroke-width="1.5"/></svg>
<div class="hline" style="top:667px"></div>
<div class="hdr" style="top:673px">高级配合<small>(D)</small></div>
<svg class="a" style="left:248px;top:677px" width="12" height="9" viewBox="0 0 12 9"><path d="M1 2 L6 7 L11 2" fill="none" stroke="#555" stroke-width="1.6"/></svg>
<div class="hline" style="top:699px"></div>
<div class="hdr" style="top:705px">机械配合<small>(A)</small></div>
<svg class="a" style="left:248px;top:709px" width="12" height="9" viewBox="0 0 12 9"><path d="M1 2 L6 7 L11 2" fill="none" stroke="#555" stroke-width="1.6"/></svg>
<div class="hline" style="top:731px"></div>
<div class="hdr" style="top:737px">配合<small>(E)</small></div>
<svg class="a" style="left:248px;top:741px" width="12" height="9" viewBox="0 0 12 9"><path d="M1 7 L6 2 L11 7" fill="none" stroke="#555" stroke-width="1.6"/></svg>
<div class="a" style="left:36px;top:759px;width:213px;height:86px;background:#fff;border:1px solid #8c8c8c"></div>
<div class="hline" style="top:855px"></div>
<div class="hdr" style="top:859px">选项</div>
<div class="a" style="left:269px;top:512px;width:9px;height:39px;background:#f7f7f7;border:1px solid #8f8f8f;border-left:none"></div>
<div class="a" style="left:270px;top:527px;width:6px;height:6px;border-radius:50%;background:#c8c8c8;border:1px solid #8d8d8d"></div>

<div class="a" style="left:269px;top:60px;width:934px;height:1px;background:#8e8e8e"></div>
<div class="a" style="left:270px;top:83px;width:198px;height:30px;background:#c8ccd6;border-right:3px solid #161616;border-bottom:3px solid #161616"></div>
<svg class="a" style="left:273px;top:92px" width="8" height="11" viewBox="0 0 8 11"><path d="M2 1 L7 5.5 L2 10 Z" fill="#222"/></svg>
<svg class="a" style="left:292px;top:87px" width="20" height="20" viewBox="0 0 22 20">
<path d="M2 8 L7 5 L9 6 L9 11 L19 11 L19 16 L12 19 L2 14 Z" fill="#f2c81c" stroke="#2a2a2a" stroke-width="1.2" stroke-linejoin="round"/>
<path d="M2 8 L12 13 L12 19 M12 13 L19 11" fill="none" stroke="#2a2a2a" stroke-width="1"/>
<path d="M9 5 L14 2.5 L19 5 L19 11 L14 13.5 L9 11 Z" fill="#6ab7e8" stroke="#1f3f66" stroke-width="1.2" stroke-linejoin="round"/>
<path d="M9 5 L14 7.5 L19 5 M14 7.5 L14 13.5" fill="none" stroke="#1f3f66" stroke-width="1"/></svg>
<div class="a" style="left:315px;top:91px;font-size:12.5px;color:#1a1a1a;white-space:nowrap;letter-spacing:0.3px">Assem1 &nbsp;(默认<span style="font-size:10px">&lt;&lt;</span>默认<span style="font-size:10px">&gt;</span>_...</div>
<svg class="a" style="left:888px;top:64px" width="315" height="26" viewBox="888 64 315 26">
<!-- zoom to fit -->
<circle cx="901" cy="73.5" r="6.5" fill="#f0f0f0" stroke="#6d7b86" stroke-width="1.6"/>
<path d="M901 69.5 L899.5 71 H902.5 Z M901 77.5 L899.5 76 H902.5 Z M897 73.5 L898.5 72 V75 Z M905 73.5 L903.5 72 V75 Z" fill="#555"/>
<path d="M896.5 78 L891 83.5" stroke="#5d9cc4" stroke-width="3.2" stroke-linecap="round"/>
<!-- zoom area -->
<rect x="922.5" y="67" width="11" height="11" fill="none" stroke="#555" stroke-width="1" stroke-dasharray="2 1.5"/>
<circle cx="925.5" cy="75" r="6" fill="#e3e3e3" stroke="#7a8690" stroke-width="1.6"/>
<path d="M921 79.5 L916.5 84" stroke="#5d9cc4" stroke-width="3.2" stroke-linecap="round"/>
<!-- rotate -->
<path d="M955 70 A8 8 0 1 0 956.5 82" fill="none" stroke="#5a9cc6" stroke-width="3"/>
<path d="M951 67 L959.5 66 L959 74 Z" fill="#4a90c0"/>
<!-- previous view -->
<path d="M970 80 L983 69.5 L986.5 73 L975 84 Z" fill="#e3e3e3" stroke="#777" stroke-width="1.2"/>
<path d="M987 80 H979 M981.5 77 L978.5 80 L981.5 83" fill="none" stroke="#4a90c0" stroke-width="2.2"/>
<!-- section -->
<path d="M995 72 L1003 68 L1011 71 V84 L1003 81 L995 84 Z" fill="#f0f0f0" stroke="#d2d2d2" stroke-width="1.2"/>
<!-- view orientation -->
<rect x="1021" y="72" width="11" height="12" fill="#7fbde0" stroke="#2e6080" stroke-width="1.2"/>
<path d="M1021 72 L1026 67 H1037 L1032 72 M1037 67 V79 L1032 84" fill="none" stroke="#333" stroke-width="1.1"/>
<path d="M1045.5 75 L1051 75 L1048.2 78 Z" fill="#777"/>
<!-- normal to -->
<path d="M1060 83 L1068 79 L1077 83 L1069 87 Z" fill="#7fbde0" stroke="#3f7fa8" stroke-width="1"/>
<path d="M1069 82 V68" stroke="#333" stroke-width="1.8"/><path d="M1065.5 71 L1069 66.5 L1072.5 71 Z" fill="#333"/>
<!-- shaded active -->
<rect x="1082.5" y="63.5" width="25" height="25" fill="#a8a8a8" stroke="#4a4a4a" stroke-width="1"/>
<path d="M1088 71 L1095 67.5 L1102 71 V80 L1095 84 L1088 80 Z" fill="#67b6e3" stroke="#0f3350" stroke-width="1.4" stroke-linejoin="round"/>
<path d="M1088 71 L1095 75 L1102 71 M1095 75 V84" fill="none" stroke="#0f3350" stroke-width="1.2"/>
<!-- display style -->
<path d="M1114 70 L1120 67 L1129 69 V83 L1121 86 L1114 84 Z" fill="#8cc7ea" stroke="#555" stroke-width="1"/>
<rect x="1122" y="71" width="7" height="13" fill="#f5f5f5"/>
<path d="M1114 70 L1122 72 L1129 69 M1122 72 V86" fill="none" stroke="#555" stroke-width="1"/>
<path d="M1137.5 75 L1143 75 L1140.2 78 Z" fill="#777"/>
<!-- hide/show -->
<path d="M1152 76 C1156 70 1166 70 1170 76 C1166 82 1156 82 1152 76 Z" fill="#e4e4e4" stroke="#9a9a9a" stroke-width="1"/>
<circle cx="1161" cy="76" r="3.6" fill="#777"/><path d="M1162 68 V85" stroke="#666" stroke-width="1.2"/>
<path d="M1177.5 75 L1183 75 L1180.2 78 Z" fill="#777"/>
<circle cx="1199" cy="75" r="8" fill="#e0e0e0" stroke="#c8c8c8" stroke-width="1"/>
</svg>

</body></html>
